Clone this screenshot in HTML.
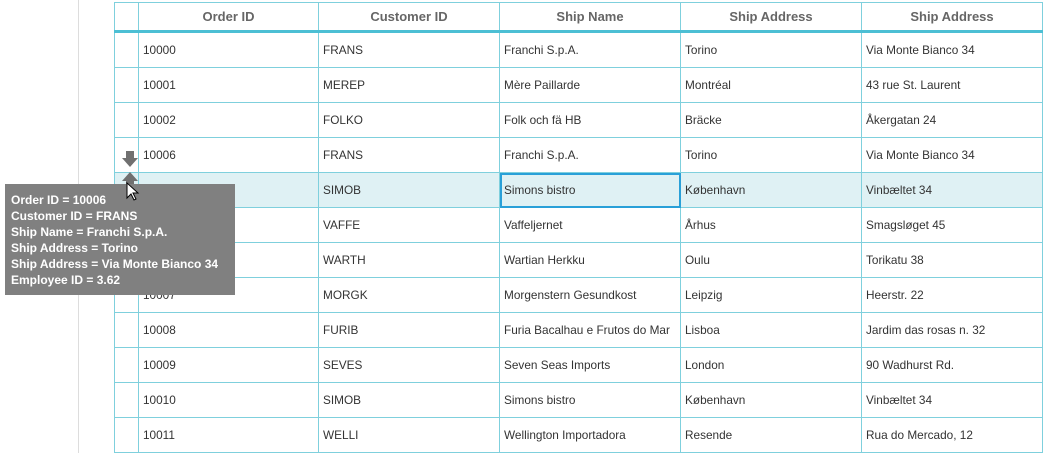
<!DOCTYPE html>
<html><head><style>
body{margin:0;width:1043px;height:453px;background:#fff;position:relative;overflow:hidden;font-family:"Segoe UI","Liberation Sans",sans-serif;font-size:11.8px;color:#333}
.vl{position:absolute;left:78px;top:0;width:1px;height:453px;background:#ddd}
table{position:absolute;left:114px;top:2px;border-collapse:collapse;table-layout:fixed}
td,th{border:1px solid #7fd0dd;padding:0 0 0 4px;text-align:left;font-weight:normal;white-space:nowrap;overflow:hidden}
th{height:27px;text-align:center;color:#666;font-size:13px;font-weight:600;border-bottom:3px solid #4cbfd4;padding:0}
td{height:34px}
tr.sel td{background:#dff1f4}
td.cur{outline:2px solid #29a0d8;outline-offset:-2px}
.tip{position:absolute;left:5px;top:184px;width:230px;height:111px;background:#808080;color:#fff;font-weight:bold;font-size:12px;line-height:16px;box-sizing:border-box;padding:8px 6px}
</style></head><body>
<div class="vl"></div>
<table>
<colgroup><col style="width:24px"><col style="width:180px"><col style="width:181px"><col style="width:181px"><col style="width:181px"><col style="width:181px"></colgroup>
<tr><th></th><th>Order ID</th><th>Customer ID</th><th>Ship Name</th><th>Ship Address</th><th>Ship Address</th></tr>
<tr><td></td><td>10000</td><td>FRANS</td><td>Franchi S.p.A.</td><td>Torino</td><td>Via Monte Bianco 34</td></tr>
<tr><td></td><td>10001</td><td>MEREP</td><td>Mère Paillarde</td><td>Montréal</td><td>43 rue St. Laurent</td></tr>
<tr><td></td><td>10002</td><td>FOLKO</td><td>Folk och fä HB</td><td>Bräcke</td><td>Åkergatan 24</td></tr>
<tr><td></td><td>10006</td><td>FRANS</td><td>Franchi S.p.A.</td><td>Torino</td><td>Via Monte Bianco 34</td></tr>
<tr class="sel"><td></td><td></td><td>SIMOB</td><td class="cur">Simons bistro</td><td>København</td><td>Vinbæltet 34</td></tr>
<tr><td></td><td></td><td>VAFFE</td><td>Vaffeljernet</td><td>Århus</td><td>Smagsløget 45</td></tr>
<tr><td></td><td></td><td>WARTH</td><td>Wartian Herkku</td><td>Oulu</td><td>Torikatu 38</td></tr>
<tr><td></td><td>10007</td><td>MORGK</td><td>Morgenstern Gesundkost</td><td>Leipzig</td><td>Heerstr. 22</td></tr>
<tr><td></td><td>10008</td><td>FURIB</td><td>Furia Bacalhau e Frutos do Mar</td><td>Lisboa</td><td>Jardim das rosas n. 32</td></tr>
<tr><td></td><td>10009</td><td>SEVES</td><td>Seven Seas Imports</td><td>London</td><td>90 Wadhurst Rd.</td></tr>
<tr><td></td><td>10010</td><td>SIMOB</td><td>Simons bistro</td><td>København</td><td>Vinbæltet 34</td></tr>
<tr><td></td><td>10011</td><td>WELLI</td><td>Wellington Importadora</td><td>Resende</td><td>Rua do Mercado, 12</td></tr>
</table>
<div class="tip">Order ID = 10006<br>Customer ID = FRANS<br>Ship Name = Franchi S.p.A.<br>Ship Address = Torino<br>Ship Address = Via Monte Bianco 34<br>Employee ID = 3.62</div>
<svg style="position:absolute;left:0;top:0" width="1043" height="453">
<path d="M126 151h8v7h4l-8 9l-8-9h4z" fill="#707070"/>
<path d="M130 172l8 9h-4v3h-8v-3h-4z" fill="#707070"/>
<path d="M127 183v15l4-4l3 6l2-1l-3-6h5z" fill="#fff" stroke="#000" stroke-width="1"/>
</svg>
</body></html>
